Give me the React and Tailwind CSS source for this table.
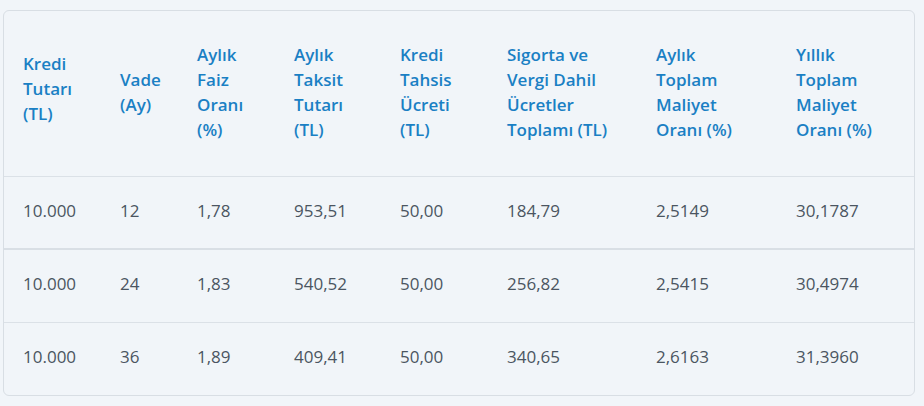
import React from 'react'

const headers = [
  ['Kredi', 'Tutarı', '(TL)'],
  ['Vade', '(Ay)'],
  ['Aylık', 'Faiz', 'Oranı', '(%)'],
  ['Aylık', 'Taksit', 'Tutarı', '(TL)'],
  ['Kredi', 'Tahsis', 'Ücreti', '(TL)'],
  ['Sigorta ve', 'Vergi Dahil', 'Ücretler', 'Toplamı (TL)'],
  ['Aylık', 'Toplam', 'Maliyet', 'Oranı (%)'],
  ['Yıllık', 'Toplam', 'Maliyet', 'Oranı (%)'],
]

const widths = ['w-[116px]', 'w-[77px]', 'w-[97px]', 'w-[106px]', 'w-[107px]', 'w-[149px]', 'w-[140px]', 'w-[118px]']

const rows = [
  ['10.000', '12', '1,78', '953,51', '50,00', '184,79', '2,5149', '30,1787'],
  ['10.000', '24', '1,83', '540,52', '50,00', '256,82', '2,5415', '30,4974'],
  ['10.000', '36', '1,89', '409,41', '50,00', '340,65', '2,6163', '31,3960'],
]

export default function App() {
  return (
    <div className="w-[924px] h-[406px] bg-[#f1f5f9] pt-[10px] pl-[3px]" style={{ fontFamily: '"Open Sans", sans-serif' }}>
      <div className="w-[912px] h-[386px] border border-[#d8dee4] rounded-[6px] overflow-hidden">
        <table className="table-fixed border-collapse w-full">
          <thead>
            <tr className="h-[165px] border-b border-[#dbe1e7]">
              {headers.map((h, i) => (
                <th
                  key={i}
                  className={`${widths[i]} ${i === 0 ? 'pl-[19px] pb-[10px]' : 'pb-[2px]'} text-left align-middle font-semibold text-[17px] leading-[25px] text-[#1a80c4]`}
                >
                  {h.map((line, j) => (
                    <div key={j}>{line}</div>
                  ))}
                </th>
              ))}
            </tr>
          </thead>
          <tbody>
            {rows.map((r, i) => (
              <tr
                key={i}
                className={`h-[73px] ${i === 0 ? 'border-b-2 border-[#d9dfe5]' : i === 1 ? 'border-b border-[#dbe1e7]' : ''}`}
              >
                {r.map((c, j) => (
                  <td key={j} className={`${j === 0 ? 'pl-[19px]' : ''} pb-[4px] text-[17px] text-[#4b5561] align-middle`}>
                    {c}
                  </td>
                ))}
              </tr>
            ))}
          </tbody>
        </table>
      </div>
    </div>
  )
}
